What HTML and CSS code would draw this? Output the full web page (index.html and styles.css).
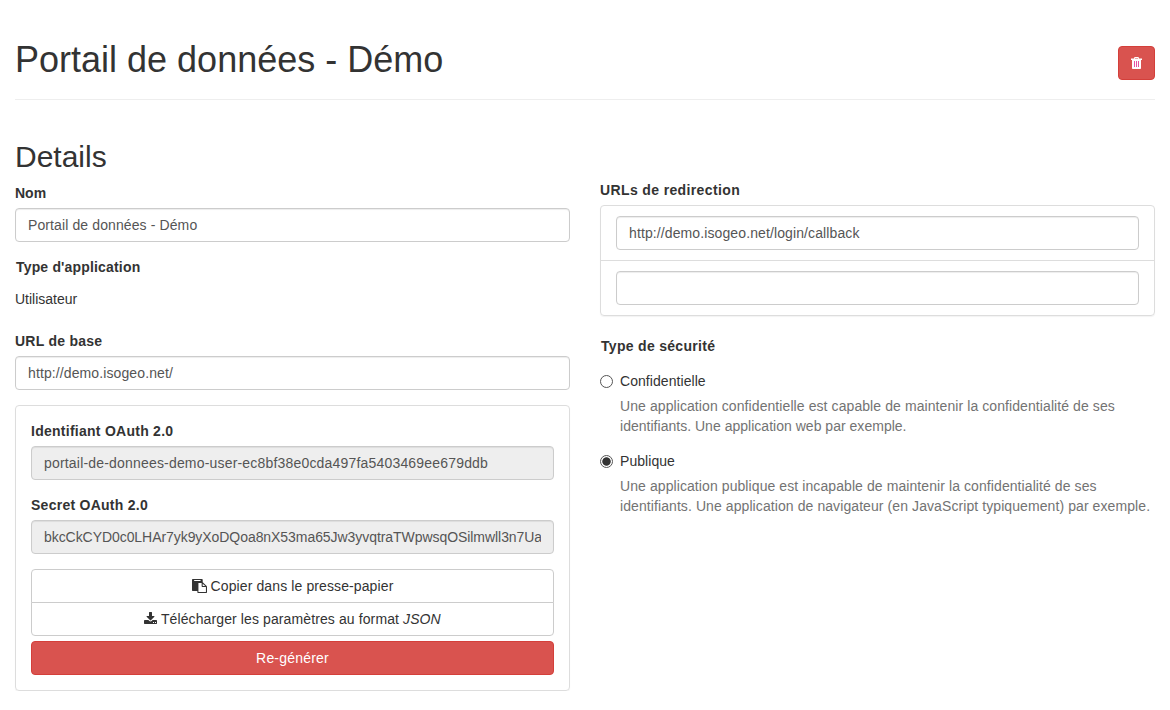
FILE: index.html
```html
<!DOCTYPE html>
<html lang="fr">
<head>
<meta charset="utf-8">
<title>Portail de données - Démo</title>
<link rel="stylesheet" href="styles.css">
</head>
<body>
<header class="page-header">
  <h1>Portail de données - Démo</h1>
  <button class="btn btn-danger btn-delete" aria-label="Supprimer">
    <svg class="icon-trash" width="11" height="12" viewBox="0 0 11 12"><path fill="#fff" fill-rule="evenodd" d="M3.500 0h4L8 1.500H11V3H10v8.200q0 .8-.8.8H1.800Q1 12 1 11.200V3H0V1.500h3zM4 1v.6h3V1z"/><path fill="#e653a4" d="M3 4h1v6H3zM5 4h1v6H5zM7 4h1v6H7z"/></svg>
  </button>
</header>
<main class="columns">
  <section class="column">
    <h2>Details</h2>
    <div class="group">
      <label for="name">Nom</label>
      <input id="name" class="control" type="text" value="Portail de données - Démo">
    </div>
    <div class="group">
      <span class="label app-type">Type d'application</span>
      <p class="static">Utilisateur</p>
    </div>
    <div class="group">
      <label for="base" class="wide">URL de base</label>
      <input id="base" class="control" type="text" value="http://demo.isogeo.net/">
    </div>
    <div class="panel credentials">
      <div class="group">
        <label for="ident" class="wide">Identifiant OAuth 2.0</label>
        <input id="ident" class="control client-id" type="text" readonly value="portail-de-donnees-demo-user-ec8bf38e0cda497fa5403469ee679ddb">
      </div>
      <div class="group">
        <label for="secret" class="wide">Secret OAuth 2.0</label>
        <input id="secret" class="control client-secret" type="text" readonly value="bkcCkCYD0c0LHAr7yk9yXoDQoa8nX53ma65Jw3yvqtraTWpwsqOSilmwll3n7Uas">
      </div>
      <div class="btn-stack">
        <button class="btn btn-default"><svg class="icon" width="15" height="14" viewBox="0 0 1792 1792" preserveAspectRatio="none"><path fill="#333" d="M768 1664h896v-640h-416q-40 0-68-28t-28-68V512H768zM1024 224v-64q0-13-9.500-22.500T992 128H288q-13 0-22.500 9.500T256 160v64q0 13 9.500 22.500T288 256h704q13 0 22.500-9.500T1024 224zM1280 896h299l-299-299zM1792 1024v672q0 40-28 68t-68 28H736q-40 0-68-28t-28-68v-160H96q-40 0-68-28t-28-68V96q0-40 28-68T96 0h1088q40 0 68 28t28 68v328q21 13 36 28l408 408q28 28 48 76t20 88z"/></svg> Copier dans le presse-papier</button>
        <button class="btn btn-default"><svg class="icon" width="13" height="14" viewBox="0 0 1664 1792"><path fill="#333" d="M1280 1344q0-26-19-45t-45-19-45 19-19 45 19 45 45 19 45-19 19-45zM1536 1344q0-26-19-45t-45-19-45 19-19 45 19 45 45 19 45-19 19-45zM1664 1120v320q0 40-28 68t-68 28H96q-40 0-68-28t-28-68v-320q0-40 28-68t68-28h465l135 136q58 56 136 56t136-56l136-136h464q40 0 68 28t28 68zM1339 551q17 41-14 70l-448 448q-18 19-45 19t-45-19L339 621q-31-29-14-70 17-39 59-39h256V64q0-26 19-45t45-19h256q26 0 45 19t19 45v448h256q42 0 59 39z"/><path fill="#fff" d="M1152 1280h128v128h-128zM1408 1280h128v128h-128z"/></svg> Télécharger les paramètres au format <em>JSON</em></button>
      </div>
      <button class="btn btn-danger btn-block">Re-générer</button>
    </div>
  </section>
  <section class="column column-right">
    <span class="label redirects">URLs de redirection</span>
    <div class="panel url-list">
      <div class="url-item"><input class="control" type="text" value="http://demo.isogeo.net/login/callback"></div>
      <div class="url-item"><input class="control" type="text"></div>
    </div>
    <span class="label security">Type de sécurité</span>
    <label class="radio">
      <input type="radio" name="security">
      <span class="radio-title">Confidentielle</span>
      <span class="help">Une application confidentielle est capable de maintenir la confidentialité de ses <span class="tight">identifiants. Une application web par exemple.</span></span>
    </label>
    <label class="radio">
      <input type="radio" name="security" checked>
      <span class="radio-title">Publique</span>
      <span class="help">Une application publique est incapable de maintenir la confidentialité de ses identifiants. Une application de navigateur (en JavaScript typiquement) par exemple.</span>
    </label>
  </section>
</main>
</body>
</html>
```
FILE: styles.css
```css
* { box-sizing: border-box; }
body {
  margin: 0;
  padding: 0 15px;
  font: 14px/20px "Liberation Sans", Arial, sans-serif;
  color: #333;
  background: #fff;
  overflow: hidden;
}
.page-header {
  display: flex;
  justify-content: space-between;
  align-items: flex-start;
  height: 100px;
  padding-top: 40px;
  border-bottom: 1px solid #eee;
}
h1, h2 { margin: 0; font-weight: 400; }
h1 { font-size: 36px; line-height: 39px; }
h2 { font-size: 30px; line-height: 33px; margin-bottom: 10px; }
.columns {
  display: grid;
  grid-template-columns: 555px 555px;
  column-gap: 30px;
  padding-top: 40px;
}
.column-right { padding-top: 40px; }
label, .label {
  display: block;
  margin-bottom: 5px;
  font-weight: 700;
}
.wide { letter-spacing: .26px; }
.app-type { padding-left: 1px; letter-spacing: .17px; }
.redirects { letter-spacing: .37px; }
.group { margin-bottom: 15px; }
.control {
  display: block;
  width: 100%;
  height: 34px;
  padding: 6px 12px;
  font: inherit;
  letter-spacing: .11px;
  color: #555;
  background: #fff;
  border: 1px solid #ccc;
  border-radius: 4px;
  box-shadow: inset 0 1px 1px rgba(0, 0, 0, .075);
}
.control[readonly] { background: #eee; }
.client-id { letter-spacing: .185px; }
.client-secret { letter-spacing: -.06px; }
.static { margin: 0; min-height: 34px; padding: 7px 0; }
.panel {
  border: 1px solid #ddd;
  border-radius: 4px;
  box-shadow: 0 1px 1px rgba(0, 0, 0, .05);
}
.credentials { padding: 15px; }
.btn {
  display: block;
  height: 34px;
  padding: 6px 12px;
  font: inherit;
  letter-spacing: .11px;
  text-align: center;
  border: 1px solid #ccc;
  border-radius: 4px;
}
.btn-default { width: 100%; color: #333; background: #fff; }
.btn-danger { color: #fff; background: #d9534f; border-color: #d43f3a; }
.btn-block { width: 100%; margin-top: 5px; letter-spacing: .2px; }
.btn-delete { margin-top: 6px; width: 37px; padding: 0; }
.icon-trash { display: block; margin: 0 auto; }
.btn-stack .btn:first-child { border-radius: 4px 4px 0 0; }
.btn-stack .btn:last-child { margin-top: -1px; border-radius: 0 0 4px 4px; }
.icon { vertical-align: -2px; }
.url-item { padding: 10px 15px; }
.url-item + .url-item { border-top: 1px solid #ddd; }
.security { margin-top: 20px; padding-left: 1px; letter-spacing: .3px; }
.radio {
  display: grid;
  grid-template-columns: 20px 1fr;
  margin: 15px 0 0;
  font-weight: 400;
}
.radio input {
  margin: 4px 0 0;
  width: 13px;
  height: 13px;
  appearance: none;
  border: 1px solid #555;
  border-radius: 50%;
  background: #fff;
}
.radio input:checked { background: radial-gradient(circle, #333 3.8px, #fff 4.600px); }
.radio-title { letter-spacing: .06px; }
.help { grid-column: 2; margin-top: 5px; color: #737373; letter-spacing: .085px; }
.tight { letter-spacing: .02px; }
```
